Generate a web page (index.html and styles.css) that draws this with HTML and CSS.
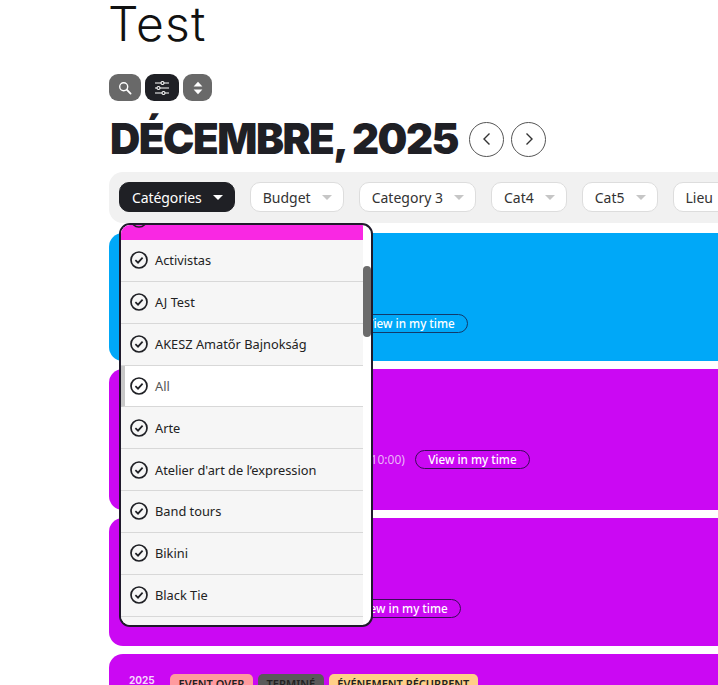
FILE: index.html
```html
<!DOCTYPE html>
<html>
<head>
    <link rel="stylesheet" href="styles.css">
</head>
<body>
    <div class="container">
        <h1 class="page-title">Test</h1>

        <div class="tools">
            <button class="tool-btn tool-search">
                <svg width="14" height="14" viewBox="0 0 14 14"><circle cx="5.7" cy="5.7" r="4" fill="none" stroke="#fff" stroke-width="1.4"/><path d="M8.7 8.7L12.6 12.6" stroke="#fff" stroke-width="1.8" stroke-linecap="round"/></svg>
            </button>
            <button class="tool-btn tool-filter">
                <svg width="16" height="16" viewBox="0 0 16 16" fill="none" stroke="#fff" stroke-width="1.1"><path d="M1 3h6M10 3h5M1 8h2M6 8h9M1 13h7M11 13h4"/><circle cx="8.5" cy="3" r="1.5"/><circle cx="4.5" cy="8" r="1.5"/><circle cx="9.5" cy="13" r="1.5"/></svg>
            </button>
            <button class="tool-btn tool-sort">
                <svg width="10" height="14" viewBox="0 0 10 14" fill="#fff"><path d="M5 .8L9.4 5.6H.6zM5 13.2L.6 8.4h8.8z"/></svg>
            </button>
        </div>

        <div class="month-row">
            <h2 class="month">DÉCEMBRE, 2025</h2>
            <button class="nav-btn">
                <svg width="12" height="14" viewBox="0 0 12 14" fill="none" stroke="#333" stroke-width="1.4"><path d="M8.5 1.5L3 7l5.5 5.5"/></svg>
            </button>
            <button class="nav-btn">
                <svg width="12" height="14" viewBox="0 0 12 14" fill="none" stroke="#333" stroke-width="1.4"><path d="M3.5 1.5L9 7l-5.5 5.5"/></svg>
            </button>
        </div>

        <div class="filters">
            <div class="filter filter-active">Catégories<span class="caret"></span></div>
            <div class="filter">Budget<span class="caret"></span></div>
            <div class="filter">Category 3<span class="caret"></span></div>
            <div class="filter">Cat4<span class="caret"></span></div>
            <div class="filter">Cat5<span class="caret"></span></div>
            <div class="filter">Lieu<span class="caret"></span></div>
        </div>

        <div class="events">
            <div class="event event-blue event-first">
                <div class="event-row row-first"><a class="view-btn">View in my time</a></div>
            </div>
            <div class="event event-purple event-second">
                <div class="event-row row-second"><span class="event-time">(10:00)</span><a class="view-btn">View in my time</a></div>
            </div>
            <div class="event event-purple event-third">
                <div class="event-row row-third"><a class="view-btn">View in my time</a></div>
            </div>
            <div class="event event-purple event-last">
                <div class="tag-row">
                    <span class="event-year">2025</span>
                    <span class="tag tag-over">EVENT OVER</span>
                    <span class="tag tag-done">TERMINÉ</span>
                    <span class="tag tag-recurring">ÉVÉNEMENT RÉCURRENT</span>
                </div>
            </div>
        </div>

        <div class="dropdown">
            <div class="dropdown-list">
                <div class="option-top">
                    <svg class="check" viewBox="0 0 18 18"><circle cx="9" cy="9" r="8" fill="none" stroke="#1f2025" stroke-width="1.5"/></svg>
                </div>
                <div class="option"><svg class="check" viewBox="0 0 18 18"><circle cx="9" cy="9" r="8"/><path d="M5.4 9.2l2.6 2.5 4.6-5"/></svg>Activistas</div>
                <div class="option"><svg class="check" viewBox="0 0 18 18"><circle cx="9" cy="9" r="8"/><path d="M5.4 9.2l2.6 2.5 4.6-5"/></svg>AJ Test</div>
                <div class="option"><svg class="check" viewBox="0 0 18 18"><circle cx="9" cy="9" r="8"/><path d="M5.4 9.2l2.6 2.5 4.6-5"/></svg>AKESZ Amatőr Bajnokság</div>
                <div class="option option-all"><svg class="check" viewBox="0 0 18 18"><circle cx="9" cy="9" r="8"/><path d="M5.4 9.2l2.6 2.5 4.6-5"/></svg>All</div>
                <div class="option"><svg class="check" viewBox="0 0 18 18"><circle cx="9" cy="9" r="8"/><path d="M5.4 9.2l2.6 2.5 4.6-5"/></svg>Arte</div>
                <div class="option"><svg class="check" viewBox="0 0 18 18"><circle cx="9" cy="9" r="8"/><path d="M5.4 9.2l2.6 2.5 4.6-5"/></svg>Atelier d'art de l’expression</div>
                <div class="option"><svg class="check" viewBox="0 0 18 18"><circle cx="9" cy="9" r="8"/><path d="M5.4 9.2l2.6 2.5 4.6-5"/></svg>Band tours</div>
                <div class="option"><svg class="check" viewBox="0 0 18 18"><circle cx="9" cy="9" r="8"/><path d="M5.4 9.2l2.6 2.5 4.6-5"/></svg>Bikini</div>
                <div class="option"><svg class="check" viewBox="0 0 18 18"><circle cx="9" cy="9" r="8"/><path d="M5.4 9.2l2.6 2.5 4.6-5"/></svg>Black Tie</div>
            </div>
            <div class="scroll-track"><div class="scroll-thumb"></div></div>
        </div>
    </div>
</body>
</html>
```

FILE: styles.css
```css
html, body {
    height: 100%;
}

body {
    margin: 0;
    overflow: hidden;
    background-color: white;
    font-family: "Noto Sans", Arial, sans-serif;
    color: #1f2025;
}

.container {
    position: relative;
    padding-left: 109px;
}

.page-title {
    margin: 0 0 0 -1px;
    font-family: Inter, "Noto Sans", sans-serif;
    font-size: 48px;
    font-weight: 300;
    line-height: 48px;
    letter-spacing: 1.2px;
    color: #111;
}

/* round icon buttons */
.tools {
    display: flex;
    gap: 4px;
    margin-top: 26px;
}

.tool-btn {
    display: flex;
    align-items: center;
    justify-content: center;
    height: 27px;
    padding: 0;
    border: none;
    border-radius: 9px;
    background-color: #696969;
}

.tool-search {
    width: 32px;
}

.tool-filter {
    width: 34px;
    background-color: #1f2025;
}

.tool-sort {
    width: 29px;
}

.month-row {
    display: flex;
    align-items: center;
    gap: 7px;
    height: 48px;
    margin-top: 14px;
}

.month {
    margin: 0 4px 0 1px;
    font-family: Inter, "Noto Sans", sans-serif;
    font-size: 42px;
    font-weight: 900;
    line-height: 48px;
    letter-spacing: -1.5px;
    color: #1f2025;
}

.nav-btn {
    display: flex;
    align-items: center;
    justify-content: center;
    width: 35px;
    height: 35px;
    padding: 0;
    border: 1px solid #555;
    border-radius: 50%;
    background-color: white;
}

/* filter bar */
.filters {
    display: flex;
    gap: 15px;
    height: 51px;
    margin-top: 9px;
    padding: 10px 0 0 10px;
    box-sizing: border-box;
    border-radius: 14px 0 0 14px;
    background-color: #f1f1f1;
}

.filter {
    display: flex;
    flex-shrink: 0;
    align-items: center;
    height: 30px;
    padding: 0 11px 0 12px;
    box-sizing: border-box;
    border: 1px solid #ddd;
    border-radius: 10px;
    background-color: white;
    font-size: 14px;
    color: #333;
}

.filter-active {
    border-color: #1f2025;
    background-color: #1f2025;
    letter-spacing: -0.1px;
    color: white;
}

.caret {
    width: 0;
    height: 0;
    margin-left: 11px;
    border-top: 5px solid #c6c6c6;
    border-left: 5px solid transparent;
    border-right: 5px solid transparent;
}

.filter-active .caret {
    border-top-color: white;
}

/* event cards */
.events {
    display: flex;
    flex-direction: column;
    gap: 8px;
    margin-top: 10px;
}

.event {
    display: flex;
    flex-direction: column;
    box-sizing: border-box;
    border-radius: 14px 0 0 14px;
    color: white;
}

.event-blue {
    background-color: #00a8f8;
}

.event-purple {
    background-color: #cb08f3;
}

.event-first {
    height: 128px;
    padding-top: 81px;
}

.event-second {
    height: 141px;
    padding-top: 81px;
}

.event-third {
    height: 128px;
    padding-top: 81px;
}

.event-last {
    height: 60px;
    padding: 20px 0 0 20px;
    overflow: hidden;
}

.event-row {
    display: flex;
    align-items: center;
    gap: 10px;
    font-size: 12px;
}

.row-first {
    margin-left: 244px;
}

.row-second {
    margin-left: 258px;
}

.row-third {
    margin-left: 237px;
}

.event-time {
    color: #ecb4f9;
}

.view-btn {
    display: block;
    width: 115px;
    height: 19px;
    box-sizing: border-box;
    border: 1px solid #3b0a59;
    border-radius: 10px;
    font-size: 11.7px;
    font-weight: 500;
    line-height: 17px;
    text-align: center;
    color: white;
}

.event-blue .view-btn {
    border-color: #123a6b;
}

.tag-row {
    display: flex;
    align-items: flex-start;
    gap: 5px;
}

.event-year {
    width: 36px;
    font-family: Inter, "Noto Sans", sans-serif;
    font-size: 10px;
    font-weight: 700;
    line-height: 12px;
    color: #f6d4fd;
}

.tag {
    height: 20px;
    padding: 0 8.6px;
    border-radius: 5px;
    font-size: 11px;
    font-weight: 600;
    line-height: 20px;
    color: #222;
}

.tag-over {
    background-color: #ff9a9e;
}

.tag-done {
    background-color: #5a5a5a;
}

.tag-recurring {
    background-color: #ffcf87;
}

/* categories dropdown, open over the cards */
.dropdown {
    position: absolute;
    top: 223px;
    left: 119px;
    display: flex;
    width: 254px;
    height: 404px;
    box-sizing: border-box;
    border: 2px solid #1f1a2b;
    border-radius: 11px;
    background-color: white;
    overflow: hidden;
}

.dropdown-list {
    width: 242px;
    flex-shrink: 0;
    background-color: #f6f6f6;
}

.option-top {
    display: flex;
    align-items: flex-end;
    height: 15px;
    padding-left: 9px;
    overflow: hidden;
    background-color: #f928e3;
}

.option-top .check {
    flex-shrink: 0;
    margin-bottom: 12px;
}

.option {
    display: flex;
    align-items: center;
    gap: 7px;
    height: 41.85px;
    padding-left: 9px;
    box-sizing: border-box;
    border-bottom: 1px solid #d8d8d8;
    font-size: 12.8px;
    color: #222;
}

.option-all {
    padding-left: 5px;
    border-left: 4px solid #c8c8c8;
    background-color: white;
    color: #555;
}

.check {
    width: 18px;
    height: 18px;
    flex-shrink: 0;
    fill: none;
    stroke: #1f2025;
    stroke-width: 1.7;
}

.scroll-track {
    flex: 1;
    padding: 41px 0 0;
}

.scroll-thumb {
    width: 8px;
    height: 71px;
    border-radius: 4px;
    background-color: #6b6b6b;
}
```
